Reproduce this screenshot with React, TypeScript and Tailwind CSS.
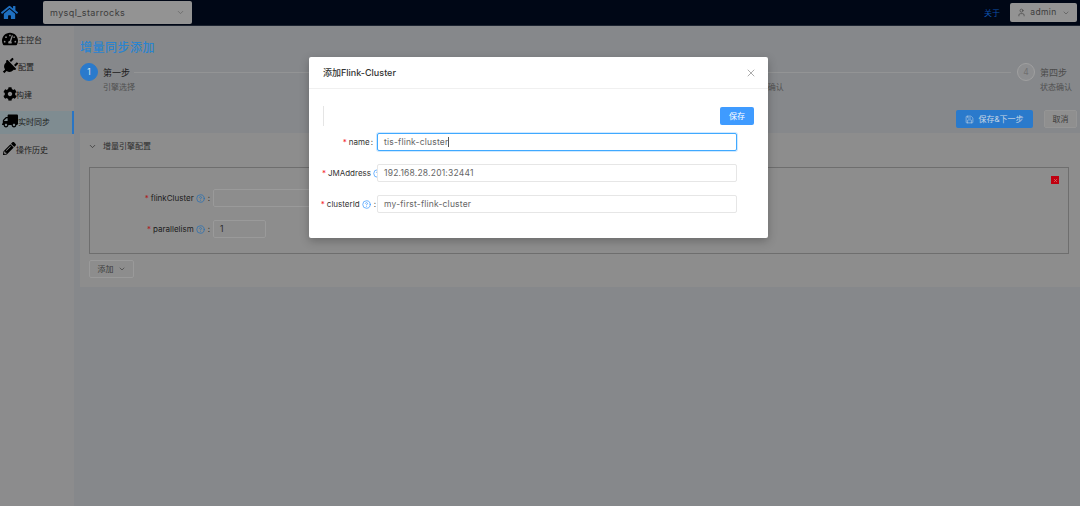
import { FaHome, FaTachometerAlt, FaPlug, FaCog, FaTruck, FaPencilAlt } from "react-icons/fa";
import { ChevronDown, X, User, Save, CircleHelp } from "lucide-react";

const font = { fontFamily: '"Inter","Noto Sans CJK SC",sans-serif' };

function Help({ className = "", dim }: { className?: string; dim?: boolean }) {
  return <CircleHelp size={9} strokeWidth={1.8} className={`shrink-0 ${dim ? "text-[#1f6fb8]" : "text-[#2a90ff]"} ${className}`} />;
}

function Nav({ icon, label, active, gap }: { icon: React.ReactNode; label: string; active?: boolean; gap?: string }) {
  return (
    <div className={`h-[23px] flex items-center pl-[1px] mb-[4.5px] border-r-2 ${active ? "bg-[#7f8c91] border-[#2a75c4]" : "border-transparent"}`}>
      <span className="w-[17px] -translate-y-[1px] flex justify-center shrink-0 text-black">{icon}</span>
      <span className={`text-[8px] text-[#1c1c1c] ${gap ?? ""}`}>{label}</span>
    </div>
  );
}

function Step({ n, title, sub, active, last }: { n: number; title: string; sub: string; active?: boolean; last?: boolean }) {
  return (
    <div className={`flex items-start ${last ? "shrink-0" : "flex-1"}`}>
      <div className={`w-[18px] h-[18px] rounded-full flex items-center justify-center text-[8.5px] shrink-0 border ${active ? "bg-[#2a7acc] border-[#2a7acc] text-[#d8e4f0]" : "border-[#a0a0a0] text-[#707070] bg-[#8d8e90]"}`}>{n}</div>
      <div className="ml-[5px] flex-1 min-w-0">
        <div className="flex items-center h-[18px]">
          <span className={`text-[9px] leading-none whitespace-nowrap ${active ? "text-[#1c1c1c]" : "text-[#4c4c4c]"}`}>{title}</span>
          {!last && <div className="flex-1 h-px bg-[#939495] ml-[4px] mr-[6px]" />}
        </div>
        <div className="text-[8px] leading-none mt-[2px] whitespace-nowrap text-[#505050]">{sub}</div>
      </div>
    </div>
  );
}

function ModalRow({ label, help, value, focus, clip, colon = "ml-[2px] mr-[2px]" }: { label: string; help?: boolean; value: string; focus?: boolean; clip?: boolean; colon?: string }) {
  return (
    <div className="flex items-center h-[18px] mb-[13px]">
      <div className="w-[68px] flex items-center justify-end text-[8px] text-[#333] shrink-0 whitespace-nowrap">
        <span className="text-[#f5222d] mr-[2px]">*</span>
        <span>{label}</span>
        {help && <Help className={clip ? "ml-[2px] -mr-[5px]" : "ml-[2px]"} />}
        {!clip && <span className={colon}>:</span>}
      </div>
      <div className={`relative w-[360px] h-[18px] rounded-[2px] border flex items-center px-[6px] text-[8.5px] text-[#666] bg-white tracking-[0.2px] ${focus ? "border-[#40a9ff] shadow-[0_0_0_1px_rgba(24,144,255,0.2)]" : "border-[#e6e6e6]"}`}>
        {value}
        {focus && <span className="w-px h-[10px] bg-[#555]" />}
      </div>
    </div>
  );
}

export default function App() {
  return (
    <div className="relative w-full h-screen overflow-hidden bg-[#86888b] flex flex-col" style={font}>
      <header className="h-[26px] bg-[#000716] border-b border-[#1c2330] flex items-center shrink-0">
        <FaHome size={17} className="ml-[1px] text-[#1e6fc0]" />
        <div className="ml-[25px] w-[149px] h-[23px] bg-[#939393] rounded-[2px] flex items-center justify-between px-[7px] text-[9px] text-[#3c3c3c] tracking-[0.4px]">
          <span>mysql_starrocks</span>
          <ChevronDown size={9} className="text-[#666]" />
        </div>
        <div className="flex-1" />
        <span className="text-[8px] text-[#0d50a8] mr-[10px]">关于</span>
        <div className="w-[67px] h-[19px] bg-[#939393] rounded-[2px] mr-[3px] flex items-center justify-center gap-[4px] text-[8.5px] text-[#3c3c3c] tracking-[0.4px]">
          <User size={9} strokeWidth={1.6} />
          <span>admin</span>
          <ChevronDown size={8} className="text-[#555] ml-[1px]" />
        </div>
      </header>
      <div className="flex flex-1 min-h-0">
        <aside className="w-[74px] shrink-0 bg-[#8c8c8d] pt-[2px] flex flex-col">
          <Nav icon={<FaTachometerAlt size={16} />} label="主控台" />
          <Nav icon={<FaPlug size={17} className="rotate-45" />} label="配置" />
          <Nav icon={<FaCog size={14} />} label="构建" gap="-ml-[2px]" />
          <Nav icon={<FaTruck size={16} className="-scale-x-100" />} label="实时同步" active />
          <Nav icon={<FaPencilAlt size={13} />} label="操作历史" gap="-ml-[2px]" />
        </aside>
        <main className="flex-1 min-w-0 pl-[6px] pt-[13px]">
          <h1 className="text-[12px] tracking-[0.5px] leading-[18px] font-medium text-[#2a84d0]">增量同步添加</h1>
          <div className="flex mt-[6px] pr-[8px]">
            <Step n={1} title="第一步" sub="引擎选择" active />
            <Step n={2} title="第二步" sub="Sink选择" />
            <Step n={3} title="第三步" sub="Sink表配置确认" />
            <Step n={4} title="第四步" sub="状态确认" last />
          </div>
          <div className="flex justify-end gap-[11px] pr-[3px] mt-[19px]">
            <div className="w-[77px] h-[18px] bg-[#2a7acc] rounded-[2px] flex items-center justify-center gap-[4px] text-[8px] text-[#c8d6e4]">
              <Save size={9} strokeWidth={1.5} />
              <span>保存&下一步</span>
            </div>
            <div className="w-[33px] h-[18px] bg-[#8f8f8f] rounded-[2px] border border-[#959595] flex items-center justify-center text-[8px] text-[#3c3c3c]">取消</div>
          </div>
          <section className="mt-[5px] bg-[#8d8d8d] pl-[9px] pr-[11px] h-[154px]">
            <div className="h-[34px] flex items-center pb-[8px] text-[8px] text-[#2c2c2c]">
              <ChevronDown size={9} className="text-[#333] -ml-[1px]" />
              <span className="ml-[6px]">增量引擎配置</span>
            </div>
            <div className="relative h-[87px] border border-[#6e6e6e] pt-[21px]">
              <div className="absolute right-[9px] top-[8px] w-[8px] h-[8px] bg-[#c00010] flex items-center justify-center">
                <X size={5} strokeWidth={3} className="text-[#e08080]" />
              </div>
              <div className="flex items-center h-[18px] mb-[13px]">
                <div className="w-[123px] flex items-center justify-end text-[8px] text-[#1c1c1c] whitespace-nowrap">
                  <span className="text-[#b01820] mr-[2px]">*</span>flinkCluster<Help dim className="ml-[2px]" /><span className="ml-[3px] mr-[3px]">:</span>
                </div>
                <div className="w-[300px] h-[18px] border border-[#9a9a9a] rounded-[2px]" />
              </div>
              <div className="flex items-center h-[18px]">
                <div className="w-[123px] flex items-center justify-end text-[8px] text-[#1c1c1c] whitespace-nowrap">
                  <span className="text-[#b01820] mr-[2px]">*</span>parallelism<Help dim className="ml-[2px]" /><span className="ml-[3px] mr-[3px]">:</span>
                </div>
                <div className="w-[53px] h-[18px] border border-[#9a9a9a] rounded-[2px] flex items-center px-[6px] text-[8.5px] text-[#2c2c2c]">1</div>
              </div>
            </div>
            <div className="mt-[6px] w-[45px] h-[18px] border border-[#9a9a9a] rounded-[2px] flex items-center justify-center gap-[4px] text-[8px] text-[#3c3c3c]">
              <span>添加</span>
              <ChevronDown size={8} className="text-[#3c3c3c]" />
            </div>
          </section>
        </main>
      </div>

      <div className="absolute left-[309px] top-[57px] w-[459px] h-[181px] bg-white rounded-[2px] shadow-[0_3px_10px_rgba(0,0,0,0.25)] flex flex-col">
        <div className="h-[32px] flex items-center justify-between pl-[14px] pr-[11px] border-b border-[#f0f0f0] shrink-0">
          <span className="text-[9px] font-medium text-[#333]">添加Flink-Cluster</span>
          <X size={12} strokeWidth={1.4} className="text-[#888]" />
        </div>
        <div className="pt-[17px]">
          <div className="flex items-center justify-between mx-[14px] h-[20px] border-l border-[#e5e5e5] mb-[7px]">
            <div />
            <div className="w-[34px] h-[18px] bg-[#3f9bff] rounded-[2px] flex items-center justify-center text-[8px] text-white">保存</div>
          </div>
          <ModalRow label="name" value="tis-flink-cluster" focus colon="ml-[1px] mr-[4px]" />
          <ModalRow label="JMAddress" help value="192.168.28.201:32441" clip />
          <ModalRow label="clusterId" help value="my-first-flink-cluster" colon="ml-[3px] mr-[1px]" />
        </div>
      </div>
    </div>
  );
}
